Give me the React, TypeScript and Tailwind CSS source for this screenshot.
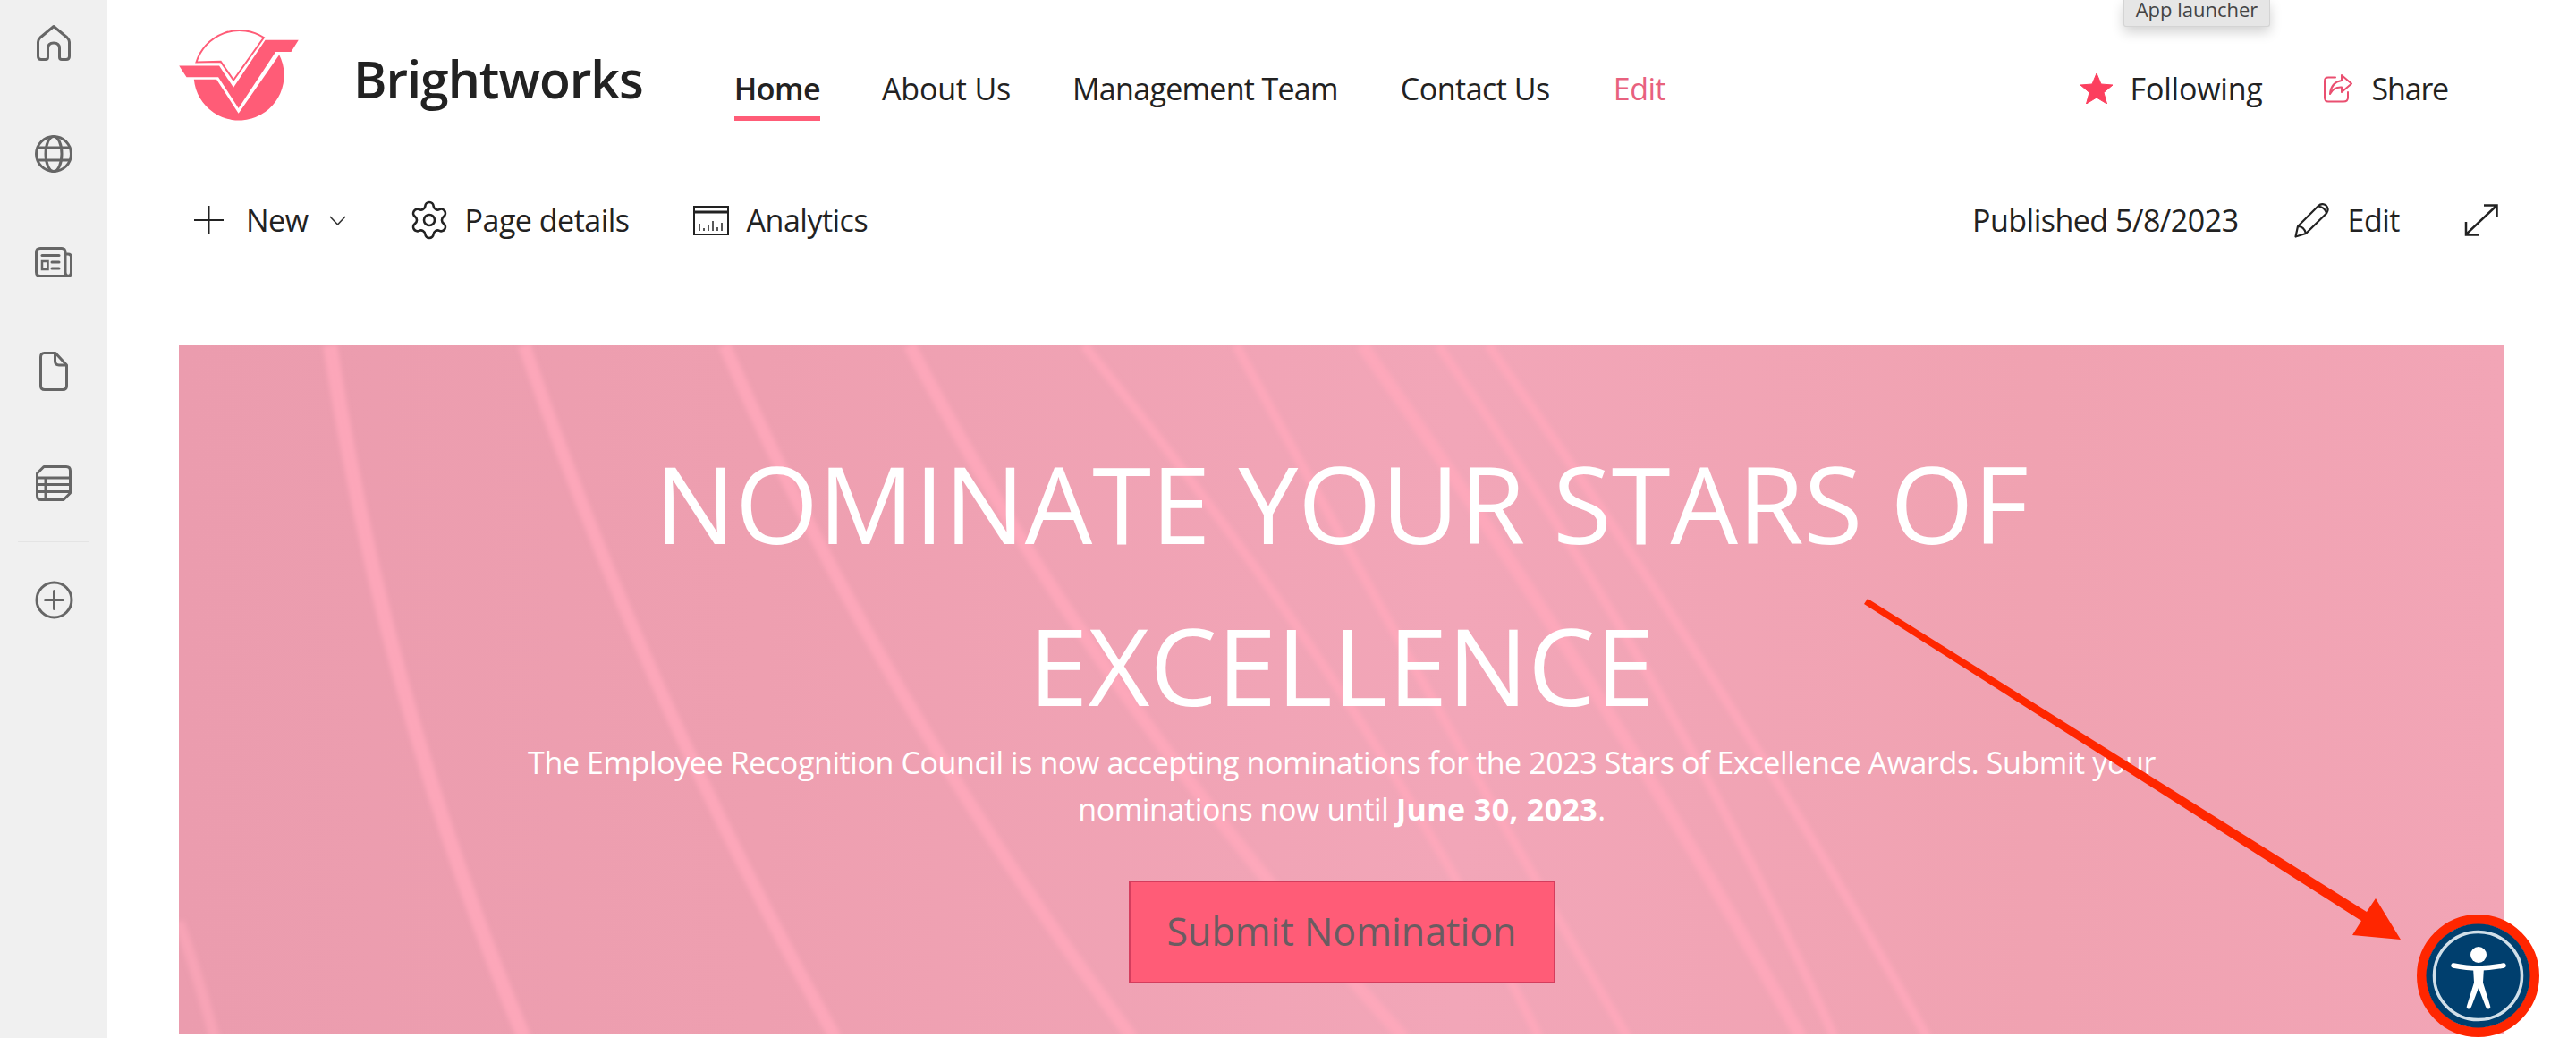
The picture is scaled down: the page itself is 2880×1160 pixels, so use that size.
import React from 'react';
import { Settings } from 'lucide-react';

const Home = () => (
  <svg width="38" height="40" viewBox="0 0 38 40" fill="none" stroke="#666" strokeWidth="3" strokeLinejoin="round">
    <path d="M19 1.500 L34 14 Q36.500 16.500 36.500 19 V35 Q36.500 38.500 33 38.500 H28 Q25.500 38.500 25.500 36 V26 Q25.500 20 19 20 Q12.500 20 12.500 26 V36 Q12.500 38.500 10 38.500 H5 Q1.500 38.500 1.500 35 V19 Q1.500 16.500 4 14 Z" />
  </svg>
);

const Globe = () => (
  <svg width="42" height="42" viewBox="0 0 42 42" fill="none" stroke="#666" strokeWidth="3">
    <circle cx="21" cy="21" r="19.500" />
    <ellipse cx="21" cy="21" rx="9" ry="19.500" />
    <path d="M3.500 14 H38.500 M3.500 28 H38.500" />
  </svg>
);

const News = () => (
  <svg width="42" height="34" viewBox="0 0 42 34" fill="none" stroke="#666" strokeWidth="3" strokeLinecap="round">
    <path d="M34 6 V28 Q34 32.500 38 32.500 H6 Q1.500 32.500 1.500 28 V6 Q1.500 1.500 6 1.500 H30 Q34 1.500 34 6 Z" />
    <path d="M34 8 H37 Q40.500 8 40.500 11 V28 Q40.500 32.500 37 32.500" />
    <path d="M8 9.500 H27" />
    <rect x="8" y="16" width="6.500" height="9" strokeWidth="2.500" />
    <path d="M19 17 H27 M19 24 H27" />
  </svg>
);

const Doc = () => (
  <svg width="32" height="44" viewBox="0 0 32 44" fill="none" stroke="#666" strokeWidth="3" strokeLinejoin="round">
    <path d="M5.500 1.500 H18 L30.500 15 V38 Q30.500 42.500 26 42.500 H6 Q1.500 42.500 1.500 38 V6 Q1.500 1.500 5.500 1.500 Z" />
    <path d="M17.500 1.500 V10 Q17.500 15 22 15 H30.500" />
  </svg>
);

const TableIcon = () => (
  <svg width="40" height="40" viewBox="0 0 40 40" fill="none" stroke="#666" strokeWidth="3" strokeLinejoin="round">
    <path d="M9 1.500 H34 Q38.500 1.500 38.500 6 V31 L31 38.500 H6 Q1.500 38.500 1.500 34 V9 Z" />
    <path d="M2 14 H38 M2 21.500 H38 M2 29.500 H38 M11 14 V38" />
  </svg>
);

const AddCircle = () => (
  <svg width="43" height="43" viewBox="0 0 43 43" fill="none" stroke="#666" strokeWidth="3" strokeLinecap="round">
    <circle cx="21.500" cy="21.500" r="19.500" />
    <path d="M21.500 11.500 V31.500 M11.500 21.500 H31.500" />
  </svg>
);

const Logo = () => (
  <svg width="134" height="103" viewBox="60 70 402 310" className="shrink-0">
    <path d="M110 238 L186 238 L260 352 L397 155 A152 152 0 1 1 110 238 Z" fill="#ff5c77" />
    <path d="M118 180 A152 152 0 0 1 345 97 L243 240 L200 178 Z" fill="#fff" stroke="#ff5c77" strokeWidth="6" />
    <path d="M60 192 L195 192 L243 265 L350 105 L462 105 L437 145 L385 145 L260 335 L192 230 L85 230 Z" fill="#ff5c77" />
  </svg>
);

const Star = () => (
  <svg width="36" height="34" viewBox="0 0 36 34">
    <path d="M18 0 L23 12 L36 13 L26 21.500 L29.500 34 L18 27 L6.500 34 L10 21.500 L0 13 L13 12 Z" fill="#fc3f5e" stroke="#fc3f5e" strokeWidth="1" strokeLinejoin="round" />
  </svg>
);

const Share = () => (
  <svg width="32" height="32" viewBox="0 0 32 32" fill="none" stroke="#ea4f70" strokeWidth="2" strokeLinejoin="round" strokeLinecap="round">
    <path d="M13 3.500 H5 Q1 3.500 1 7.500 V26 Q1 30.500 5 30.500 H22 Q27 30.500 27 26 V20" />
    <path d="M20 1 L31 10.500 L20 20 V14.500 Q11 14 7 22 Q8 9 20 7 Z" />
  </svg>
);

const PlusIcon = () => (
  <svg width="33" height="32" viewBox="0 0 33 32" fill="none" stroke="#222" strokeWidth="2">
    <path d="M16.500 0 V32 M0 16 H33" />
  </svg>
);

const Chevron = () => (
  <svg width="19" height="11" viewBox="0 0 19 11" fill="none" stroke="#333" strokeWidth="1.600">
    <path d="M1 1 L9.500 10 L18 1" />
  </svg>
);

const Analytics = () => (
  <svg width="40" height="33" viewBox="0 0 40 33" fill="none" stroke="#222" strokeWidth="2">
    <rect x="1" y="1" width="38" height="31" />
    <path d="M1 7 H39" strokeWidth="3" />
    <path d="M7 20 V28 M12 25 V28 M17 22 V28 M22 17 V28 M27 24 V28 M32 19 V28" strokeWidth="1.500" />
  </svg>
);

const PencilIcon = () => (
  <svg width="40" height="39" viewBox="0 0 40 39" fill="none" stroke="#222" strokeWidth="2.200" strokeLinejoin="round">
    <path d="M1.500 37.500 L4 26 L27 3 Q31 -0.500 35.500 2.500 Q39.500 6.500 36 11.500 L13 34 Z" />
    <path d="M4 26 Q11 26 13 34 M27 3.500 Q34 4.500 36 11" />
  </svg>
);

const Expand = () => (
  <svg width="38" height="36" viewBox="0 0 38 36" fill="none" stroke="#222" strokeWidth="2.500">
    <path d="M22 1.500 H36.500 V15 M36.500 1.500 L2 34 M2 20 V34.500 H16" />
  </svg>
);

const Streaks = () => (
  <svg className="absolute inset-0 w-full h-full" viewBox="0 0 2600 770" fill="none" stroke="#ffa8bb" strokeOpacity="0.85" strokeWidth="14">
    <defs>
      <filter id="soft">
        <feGaussianBlur stdDeviation="2.500" />
      </filter>
    </defs>
    <g filter="url(#soft)">
      <path d="M169 0 Q230 400 386 774" strokeWidth="16" />
      <path d="M386 0 Q520 392 734 774" />
      <path d="M610 0 Q780 392 1066 774" />
      <path d="M817 0 Q1022 392 1370 774" />
      <path d="M1012 0 Q1340 400 1521 774" strokeWidth="10" />
      <path d="M1182 0 Q1400 400 1620 774" strokeWidth="10" />
      <path d="M1323 0 Q1600 390 1814 774" />
      <path d="M1408 0 Q1680 390 1851 774" strokeWidth="10" />
      <path d="M1464 0 Q1740 390 1955 774" strokeWidth="10" />
      <path d="M0 644 Q20 700 40 774" strokeWidth="12" strokeOpacity="0.6" />
    </g>
  </svg>
);

const Arrow = () => (
  <svg className="absolute left-[2080px] top-[660px]" width="620" height="400" viewBox="2080 660 620 400">
    <path d="M2084 675 L2088 669 L2646 1019 L2656 1004 L2684 1050 L2630 1045 L2640 1029 Z" fill="#ff2600" />
  </svg>
);

const A11yBadge = () => (
  <div className="absolute left-[2702px] top-[1022px]">
    <svg width="137" height="137" viewBox="0 0 137 137">
      <circle cx="68.500" cy="68.500" r="63" fill="#fff" stroke="#ff2600" strokeWidth="11" />
      <circle cx="68.500" cy="68.500" r="58" fill="#003f6e" />
      <circle cx="68.500" cy="68.500" r="49" fill="none" stroke="#d0dfe9" strokeWidth="3.500" />
      <circle cx="69" cy="45" r="9" fill="#fff" />
      <path d="M41 57 Q56 60 69 60 Q82 60 97 57" fill="none" stroke="#fff" strokeWidth="5.500" strokeLinecap="round" />
      <path d="M63 59 H75 L74 76 L82 102 Q83 105 80.500 105.500 Q78 106 77 103 L69 82 L61 103 Q60 106 57.500 105.500 Q55 105 56 102 L64 76 Z" fill="#fff" />
    </svg>
  </div>
);

export default function App() {
  return (
    <div className="relative flex w-[2880px] h-[1160px] overflow-hidden bg-white text-[#222] font-['Open_Sans','Noto_Sans',sans-serif]">
      <aside className="w-[120px] shrink-0 bg-[#f0f0f0] flex flex-col items-center pt-[28px] gap-[83px]">
        <Home />
        <Globe />
        <News />
        <Doc />
        <TableIcon />
        <div className="w-[80px] h-px bg-[#e4e4e4] -mt-[38px] -mb-[40px]" />
        <AddCircle />
      </aside>

      <main className="flex-1 flex flex-col px-[80px]">
        <header className="flex h-[180px] pt-[33px]">
          <Logo />
          <span className="ml-[61px] mt-[15px] h-[80px] text-[57px] leading-[80px] font-semibold tracking-[-1px]">Brightworks</span>
          <nav className="ml-[102px] mt-[46px] flex text-[34px] leading-[40px] tracking-[-0.5px]">
            <a className="relative font-semibold">
              Home
              <span className="absolute left-0 right-0 top-[51px] h-[5px] bg-[#ff5c77]" />
            </a>
            <a className="ml-[69px] tracking-[-0.2px]">About Us</a>
            <a className="ml-[69px] tracking-[-0.7px]">Management Team</a>
            <a className="ml-[70px]">Contact Us</a>
            <a className="ml-[71px] text-[#e8617e]">Edit</a>
          </nav>
          <div className="ml-auto mt-[46px] mr-[63px] flex items-center h-[40px] text-[34px] tracking-[-0.5px]">
            <Star />
            <span className="ml-[20px] tracking-[-0.2px]">Following</span>
            <span className="ml-[68px]"><Share /></span>
            <span className="ml-[22px] tracking-[-1.2px]">Share</span>
          </div>
        </header>

        <div className="flex items-center h-[132px] pl-[17px] text-[34px] tracking-[-0.5px]">
          <PlusIcon />
          <span className="ml-[25px]">New</span>
          <span className="ml-[23px]"><Chevron /></span>
          <Settings size={48} strokeWidth={1.3} className="ml-[69px]" />
          <span className="ml-[16px]">Page details</span>
          <span className="ml-[71px]"><Analytics /></span>
          <span className="ml-[20px]">Analytics</span>
          <span className="ml-auto">Published 5/8/2023</span>
          <span className="ml-[62px]"><PencilIcon /></span>
          <span className="ml-[20px]">Edit</span>
          <span className="ml-[72px] mr-[7px]"><Expand /></span>
        </div>

        <section className="relative flex-none w-[2600px] h-[770px] mt-[74px] bg-[linear-gradient(90deg,#eb9cae_0%,#ee9fb0_25%,#f2a6b8_55%,#f0a2b1_80%,#f2a5b6_100%)] text-white text-center">
          <Streaks />
          <div className="relative flex flex-col items-center pt-[85px]">
            <h1 className="w-[1700px] text-[119.500px] leading-[181px] font-normal">NOMINATE YOUR STARS OF EXCELLENCE</h1>
            <p className="w-[1900px] -mt-[7px] text-[34px] leading-[52px] font-normal tracking-[-0.4px]">
              The Employee Recognition Council is now accepting nominations for the 2023 Stars of Excellence Awards. Submit your nominations now until <b className="font-bold tracking-[0.4px]">June 30, 2023</b>.
            </p>
            <div className="mt-[54px] w-[477px] h-[115px] flex items-center justify-center bg-[#ff5c77] border-2 border-[#d43d5d] text-[43px] text-[#6a5c61]">
              Submit Nomination
            </div>
          </div>
        </section>
      </main>

      <div className="absolute left-[2374px] top-0 w-[164px] h-[30px] flex items-start justify-center bg-[#e6e6e6] rounded-b-[3px] border-x border-b border-[#d4d4d4] shadow-[0_6px_14px_rgba(0,0,0,0.18)] text-[22px] leading-[20px] text-[#444]">
        App launcher
      </div>
      <Arrow />
      <A11yBadge />
    </div>
  );
}
